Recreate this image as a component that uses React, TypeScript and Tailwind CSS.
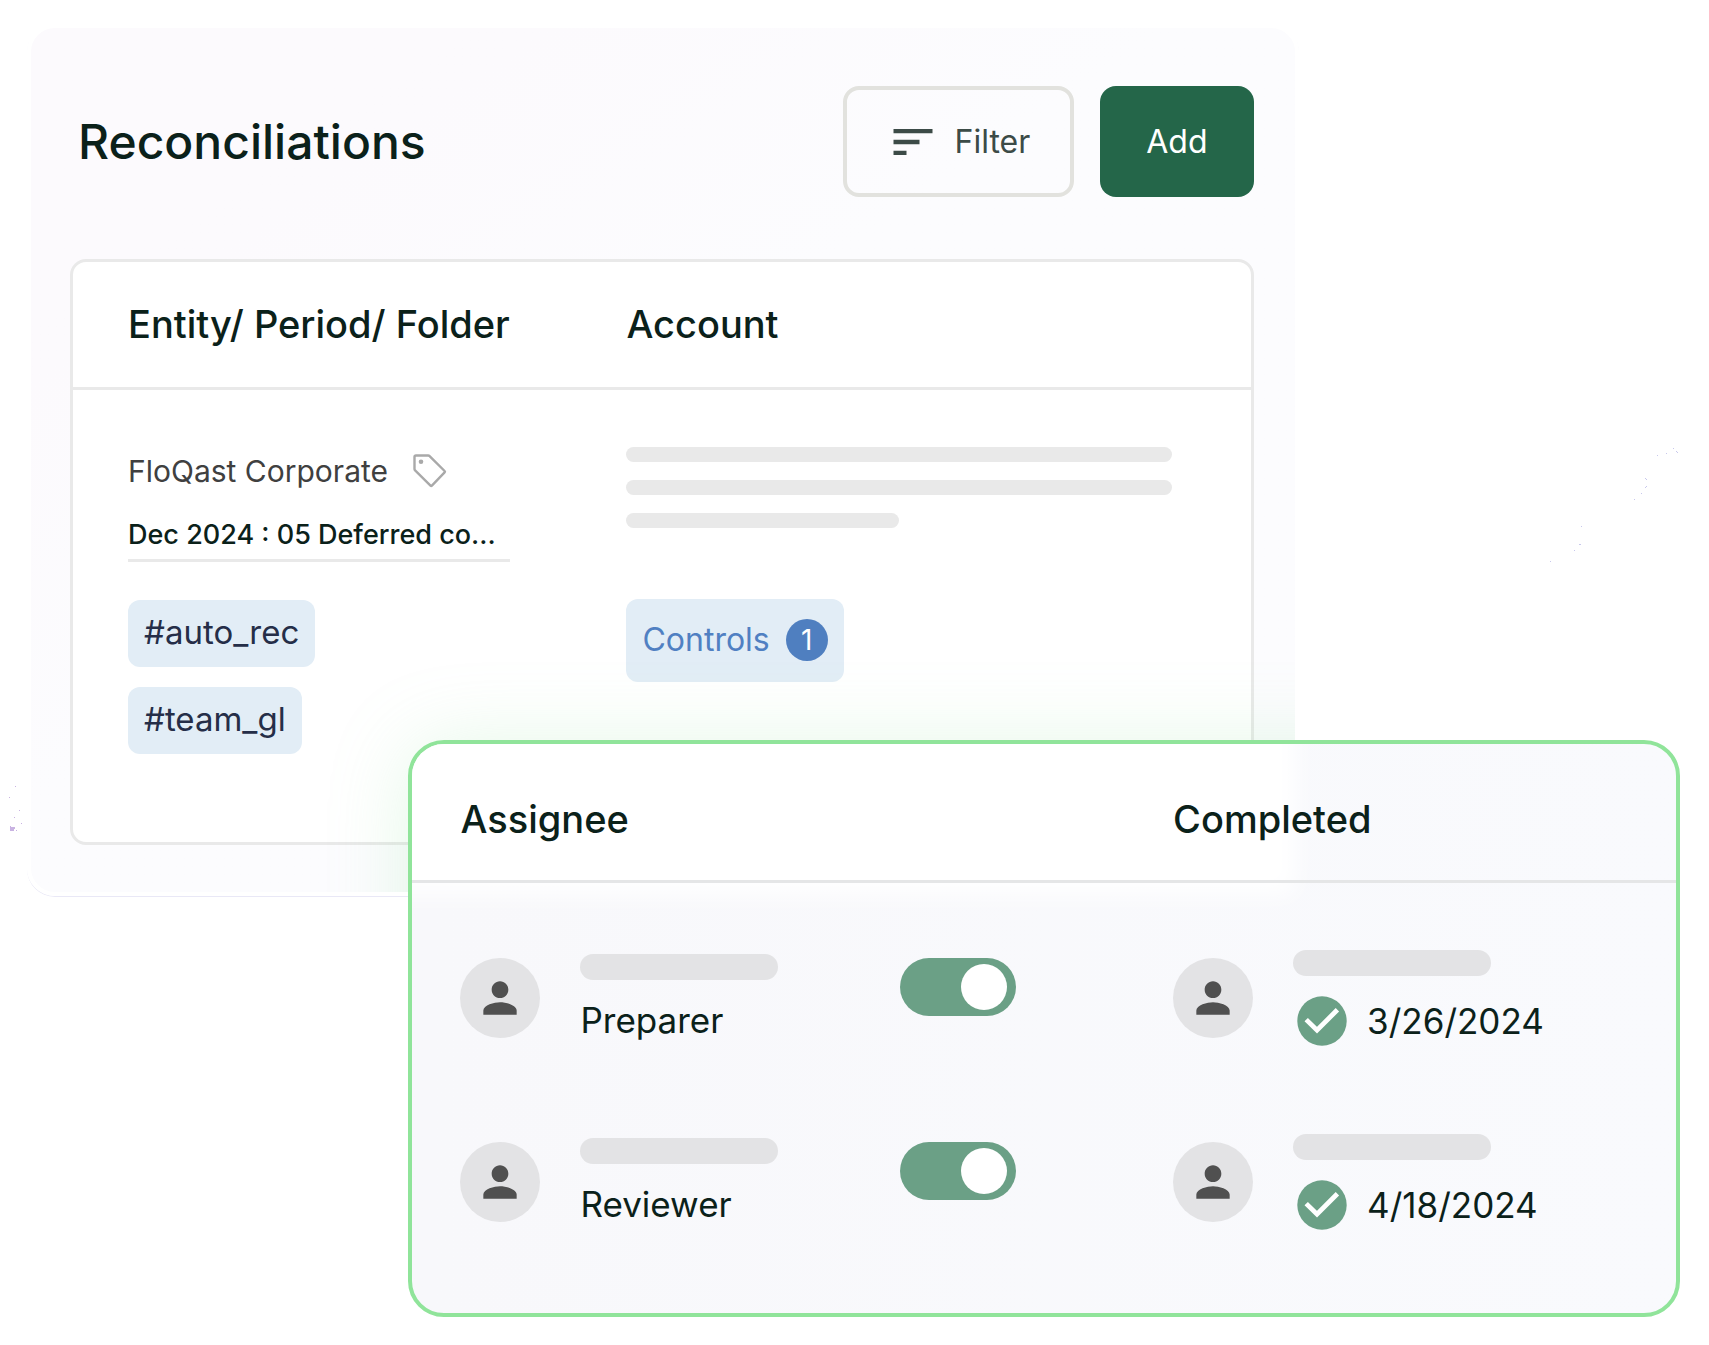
import { useState } from 'react';
import { MdPerson, MdSort } from 'react-icons/md';

type Assignment = {
  role: string;
  date: string;
  enabled: boolean;
};

const tags = ['#auto_rec', '#team_gl'];

const assignments: Assignment[] = [
  { role: 'Preparer', date: '3/26/2024', enabled: true },
  { role: 'Reviewer', date: '4/18/2024', enabled: true },
];

function TagIcon() {
  return (
    <svg viewBox="0 0 36 36" className="h-9 w-9" fill="none" aria-hidden="true">
      <path
        d="M4 2.5h12.2a2 2 0 0 1 1.4.6l15 14.9a1 1 0 0 1 0 1.4L19.9 32.6a1 1 0 0 1-1.4 0L3.1 17.4a2 2 0 0 1-.6-1.4V4A1.5 1.5 0 0 1 4 2.5Z"
        stroke="#a9a9a9"
        strokeWidth="2.4"
        strokeLinejoin="round"
      />
      <circle cx="9" cy="8.8" r="2.3" fill="#a9a9a9" />
    </svg>
  );
}

function CheckBadge() {
  return (
    <svg viewBox="0 0 50 50" className="h-[50px] w-[50px] shrink-0" fill="none" aria-hidden="true">
      <circle cx="25" cy="25" r="24.7" fill="#6ba086" />
      <path d="M9.2 23.6 20 34.2 40.4 13.8" stroke="white" strokeWidth="4.8" />
    </svg>
  );
}

// Fine specks scattered behind the cards
function Dust() {
  return (
    <>
      <svg viewBox="0 0 30 60" className="absolute top-[780px] left-0 h-[60px] w-[30px]" fill="#c9b3e2" aria-hidden="true">
        <path d="M10 46h1v1h4v2h-1v2h-4z" />
        <path d="M15 6h1v1h-1zM9 17h1v1h-1zM19 30h1v1h-1zM14 37h1v1h-1zM21 43h1v1h-1zM16 50h1v1h-1z" />
      </svg>
      <svg viewBox="0 0 140 130" className="absolute top-[440px] right-[20px] h-[130px] w-[140px]" fill="#c8c8ec" aria-hidden="true">
        <path d="M108 15h1v1h-1zM117 13h1v1h-1zM124 8h1v1h-1zM127 11h1v1h-1zM128 12h1v1h-1zM96 38h1v1h-1zM97 39h1v1h-1zM96 47h1v1h-1zM97 46h1v1h-1zM92 53h1v1h-1zM85 59h1v1h-1zM32 86h1v1h-1zM30 104h2v1h-2zM25 110h1v1h-1zM1 121h1v1h-1z" />
      </svg>
    </>
  );
}

function Avatar() {
  return (
    <div className="flex h-20 w-20 shrink-0 items-center justify-center rounded-full bg-[#e3e3e5]">
      <MdPerson className="h-[50px] w-[50px] text-[#505050]" />
    </div>
  );
}

function AssignmentRow({ role, date, enabled }: Assignment) {
  const [checked, setChecked] = useState(enabled);

  return (
    <tr className="h-[185px] align-top">
      <td className="pt-[71px] pl-12">
        <div className="flex gap-10">
          <div className="pt-1">
            <Avatar />
          </div>
          <div className="flex flex-col gap-5">
            <div className="h-[26px] w-[198px] rounded-full bg-[#e3e3e5]" />
            <span className="text-[35px] leading-10 text-[#0b211a]">{role}</span>
          </div>
        </div>
      </td>
      <td className="pt-[75px]">
        <input
          type="checkbox"
          role="switch"
          aria-label={role}
          checked={checked}
          onChange={(e) => setChecked(e.target.checked)}
          className="block h-[58px] w-[116px] cursor-pointer appearance-none rounded-full bg-gray-300 p-1.5 transition-colors before:block before:h-[46px] before:w-[46px] before:rounded-full before:bg-white before:content-[''] checked:bg-[#6ba086] checked:before:ml-[55px]"
        />
      </td>
      <td className="pt-[67px]">
        <div className="flex gap-10">
          <div className="pt-2">
            <Avatar />
          </div>
          <div className="flex flex-col gap-5">
            <div className="h-[26px] w-[198px] rounded-full bg-[#e3e3e5]" />
            <div className="flex items-center gap-5 pl-1">
              <CheckBadge />
              <span className="text-[35px] leading-10 text-[#0b211a]">{date}</span>
            </div>
          </div>
        </div>
      </td>
    </tr>
  );
}

export default function App() {
  return (
    <main className="relative flex min-h-screen flex-col bg-white pt-6 pr-[29px] pl-[27px] font-['Inter',sans-serif] text-[#0b211a]">
      <Dust />

      {/* Reconciliations */}
      <section className="relative w-10/13 overflow-hidden rounded-[28px] border-4 border-white bg-linear-to-br from-[#fcfafd] from-20% to-[#fcfcfe] to-45% pt-[58px] pr-[41px] pb-[47px] pl-[39px] shadow-[0_1px_0_#e9e8f6]">
        <header className="flex items-center justify-between">
          <h1 className="pl-2 text-[48px] leading-14 font-medium">Reconciliations</h1>
          <div className="flex gap-[26px]">
            <button
              type="button"
              className="flex h-[111px] items-center gap-4 rounded-2xl border-4 border-[#e2e2de] px-10 text-[32px] text-[#3c4b47]"
            >
              <MdSort className="h-[52px] w-[52px]" />
              Filter
            </button>
            <button
              type="button"
              className="h-[111px] rounded-2xl bg-[#246649] px-[46px] text-[32px] text-white"
            >
              Add
            </button>
          </div>
        </header>

        <div className="mt-[62px] overflow-hidden rounded-2xl border-3 border-[#e9e9e9] bg-white">
          <table className="w-full table-fixed text-left">
            <thead>
              <tr className="h-[126px] border-b-3 border-[#e9e9e9] text-[38px]">
                <th className="w-[47%] pl-[55px] font-medium">Entity/ Period/ Folder</th>
                <th className="font-medium">Account</th>
              </tr>
            </thead>
            <tbody>
              <tr className="align-top">
                <td className="pt-[61px] pr-[116px] pb-[88px] pl-[55px]">
                  <div className="flex items-center gap-6 text-[30px] leading-10 whitespace-nowrap text-[#404040]">
                    FloQast Corporate
                    <TagIcon />
                  </div>
                  <div className="mt-6 border-b-3 border-[#e9e9e9] pb-1 text-[27px] leading-10 font-medium whitespace-nowrap">
                    Dec 2024 : 05 Deferred co...
                  </div>
                  <ul className="mt-[38px] flex flex-col items-start gap-5">
                    {tags.map((tag) => (
                      <li
                        key={tag}
                        className="flex h-[67px] items-center rounded-xl bg-[#e2edf6] px-4 text-[33px] text-[#252e48]"
                      >
                        {tag}
                      </li>
                    ))}
                  </ul>
                </td>
                <td className="pt-[57px] pr-[79px]">
                  <div className="flex flex-col gap-[18px]">
                    <div className="h-[15px] rounded-full bg-[#e9e9e9]" />
                    <div className="h-[15px] rounded-full bg-[#e9e9e9]" />
                    <div className="h-[15px] w-1/2 rounded-full bg-[#e9e9e9]" />
                  </div>
                  <button
                    type="button"
                    className="mt-[71px] flex h-[83px] items-center gap-4 rounded-xl bg-[#e2edf6] px-4 text-[32px] text-[#5080c2]"
                  >
                    Controls
                    <span className="flex h-[42px] w-[42px] items-center justify-center rounded-full bg-[#4f7fc0] text-[28px] text-white">
                      1
                    </span>
                  </button>
                </td>
              </tr>
            </tbody>
          </table>
        </div>

        {/* Glow cast by the card in front */}
        <div className="pointer-events-none absolute top-[83%] left-[30%] h-full w-full rounded-[36px] shadow-[0_0_80px_rgba(144,228,154,0.25)]" />
      </section>

      {/* Assignees */}
      <section className="relative -mt-[156px] w-10/13 self-end overflow-hidden rounded-[36px] border-4 border-[#90e49a] bg-linear-to-r from-[#f8f8fb] to-[#f9fafd] pb-[61px]">
        <div className="pointer-events-none absolute -top-10 -left-10 h-[190px] w-[73%] bg-white blur-md" />
        <table className="relative w-full table-fixed text-left">
          <colgroup>
            <col className="w-[38.6%]" />
            <col className="w-[21.6%]" />
            <col />
          </colgroup>
          <thead>
            <tr className="h-[138px] border-b-3 border-[#e5e6e7] text-[38px]">
              <th colSpan={2} className="pt-4 pl-12 font-medium">
                Assignee
              </th>
              <th className="pt-4 font-medium">Completed</th>
            </tr>
          </thead>
          <tbody>
            {assignments.map((item) => (
              <AssignmentRow key={item.role} {...item} />
            ))}
          </tbody>
        </table>
      </section>
    </main>
  );
}
